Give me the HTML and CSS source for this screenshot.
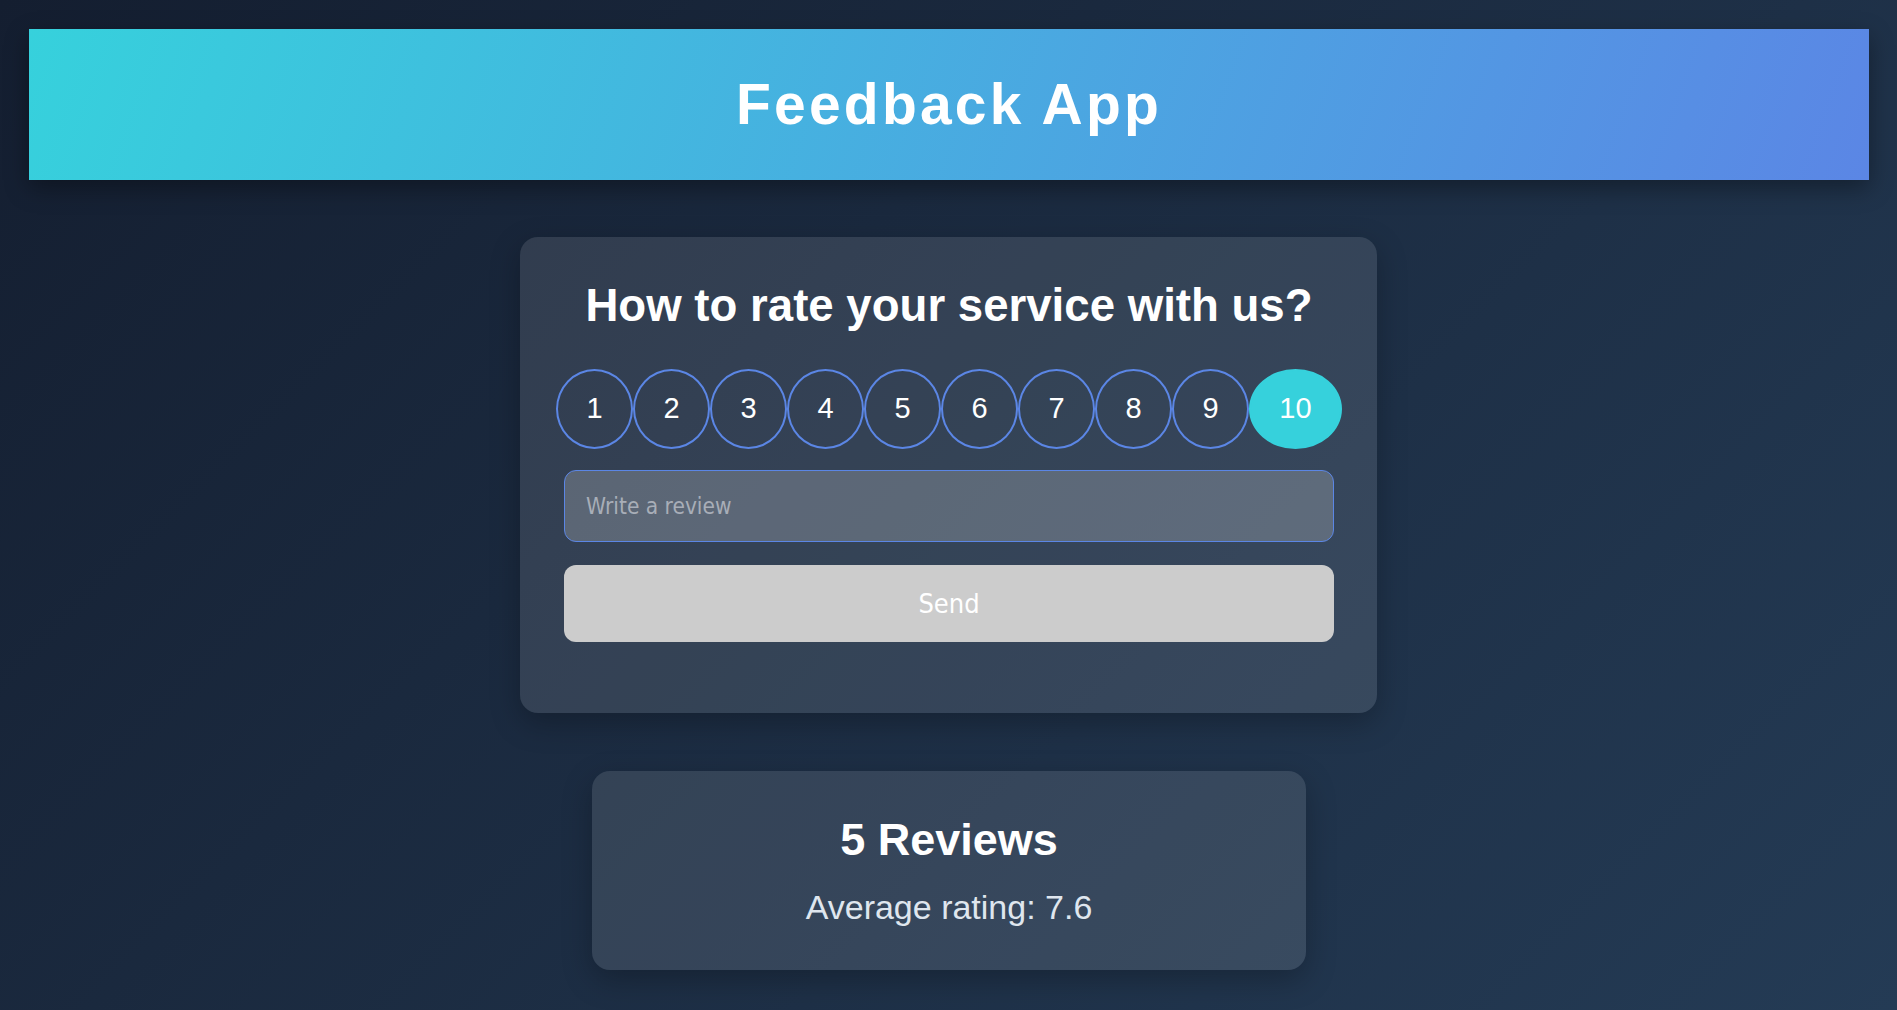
FILE: index.html
```html
<!DOCTYPE html>
<html lang="en">
<head>
<meta charset="UTF-8">
<title>Feedback App</title>
<link rel="stylesheet" href="styles.css">
</head>
<body>
  <header class="app-header">
    <h1 class="app-title">Feedback App</h1>
  </header>
  <main class="content">
    <section class="card rating-card">
      <h2 class="card-title">How to rate your service with us?</h2>
      <ul class="ratings">
        <li class="rating">1</li>
        <li class="rating">2</li>
        <li class="rating">3</li>
        <li class="rating">4</li>
        <li class="rating">5</li>
        <li class="rating">6</li>
        <li class="rating">7</li>
        <li class="rating">8</li>
        <li class="rating">9</li>
        <li class="rating rating-active">10</li>
      </ul>
      <form class="review-form">
        <input class="review-input" type="text" placeholder="Write a review">
        <button class="send-btn" type="button">Send</button>
      </form>
    </section>
    <section class="card stats-card">
      <h2 class="stats-title">5 Reviews</h2>
      <p class="stats-avg">Average rating: 7.6</p>
    </section>
  </main>
</body>
</html>
```
FILE: styles.css
```css
* { box-sizing: border-box; }

html, body {
  margin: 0;
  padding: 0;
}

body {
  min-height: 100vh;
  background: linear-gradient(135deg, #141e30 0%, #243b55 100%);
  font-family: "Liberation Sans", Arial, sans-serif;
  color: #ffffff;
  padding: 29px 28px 0 29px;
}

.app-header {
  height: 151px;
  display: flex;
  align-items: center;
  justify-content: center;
  background: linear-gradient(110deg, #36d1dc 0%, #5b86e5 100%);
  box-shadow: 0 8px 22px rgba(0, 0, 0, 0.35);
}

.app-title {
  margin: 0;
  font-size: 57px;
  font-weight: 700;
  letter-spacing: 3.2px;
  line-height: 1.2;
  color: #ffffff;
}

.content {
  display: flex;
  flex-direction: column;
  align-items: center;
  padding-top: 57px;
  gap: 58px;
}

.card {
  background: rgba(255, 255, 255, 0.11);
  border-radius: 18px;
  box-shadow: 0 10px 30px rgba(0, 0, 0, 0.25);
}

.rating-card {
  width: 857px;
  padding: 42px 43px 71px 44px;
  margin-right: 1px;
}

.card-title {
  margin: 0;
  text-align: center;
  font-size: 45.6px;
  line-height: 1.2;
  font-weight: 700;
}

.ratings {
  list-style: none;
  margin: 35px 0 0 0;
  padding: 0;
  display: flex;
  justify-content: center;
}

.rating {
  flex: none;
  width: 77px;
  height: 80px;
  border: 2px solid #5b86e5;
  border-radius: 50%;
  display: flex;
  align-items: center;
  justify-content: center;
  font-size: 29px;
  color: #ffffff;
}

.rating-active {
  width: 93px;
  background: #36d1dc;
  border-color: #36d1dc;
}

.review-form {
  display: flex;
  flex-direction: column;
  margin-top: 21px;
  gap: 23px;
}

.review-input {
  height: 72px;
  width: 100%;
  border: 1px solid #5b86e5;
  border-radius: 12px;
  background: rgba(255, 255, 255, 0.2);
  padding: 0 21px;
  font-family: "DejaVu Sans Condensed", "DejaVu Sans", sans-serif;
  font-stretch: condensed;
  font-size: 22.5px;
  color: #ffffff;
  outline: none;
}

.review-input::placeholder {
  color: #a8aeb8;
}

.send-btn {
  height: 77px;
  width: 100%;
  border: none;
  border-radius: 12px;
  background: #cccccc;
  color: #ffffff;
  font-family: "DejaVu Sans Condensed", "DejaVu Sans", sans-serif;
  font-stretch: condensed;
  font-size: 27px;
  cursor: pointer;
}

.stats-card {
  width: 714px;
  padding: 42px 20px;
  display: flex;
  flex-direction: column;
  align-items: center;
  gap: 20px;
}

.stats-title {
  margin: 0;
  font-size: 45px;
  line-height: 1.2;
  font-weight: 700;
}

.stats-avg {
  margin: 0;
  font-size: 34px;
  line-height: 1.2;
  color: #dfe6ee;
}
```
